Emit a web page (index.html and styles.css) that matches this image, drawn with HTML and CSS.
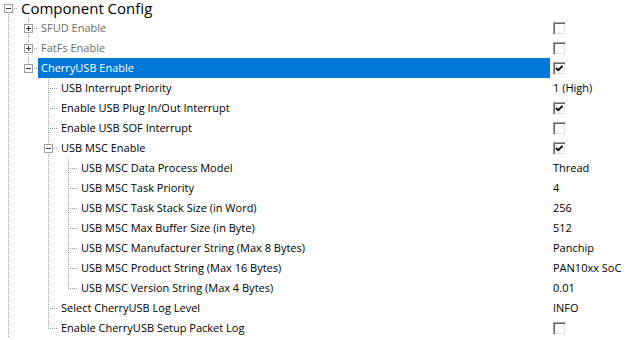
FILE: index.html
```html
<!DOCTYPE html>
<html>
<head>
    <meta charset="UTF-8">
    <title>Component Config</title>
    <link rel="stylesheet" href="styles.css">
</head>
<body>
    <div class="tree">
        <div class="row">
            <div class="node">
                <span class="slot down"><span class="exp minus"></span></span>
                <span class="label root">Component Config</span>
            </div>
            <div class="value"></div>
        </div>

        <div class="row">
            <div class="node">
                <span class="slot pipe"></span>
                <span class="slot tee"><span class="exp plus"></span></span>
                <span class="label muted">SFUD Enable</span>
            </div>
            <div class="value"><span class="check"></span></div>
        </div>

        <div class="row">
            <div class="node">
                <span class="slot pipe"></span>
                <span class="slot tee"><span class="exp plus"></span></span>
                <span class="label muted">FatFs Enable</span>
            </div>
            <div class="value"><span class="check"></span></div>
        </div>

        <div class="row">
            <div class="node">
                <span class="slot pipe"></span>
                <span class="slot ell"><span class="exp minus"></span></span>
                <span class="label selected">CherryUSB Enable</span>
            </div>
            <div class="value"><span class="check checked"><svg viewBox="0 0 13 13"><polyline points="3,6 5.2,8.2 9.6,3.8"/></svg></span></div>
        </div>

        <div class="row">
            <div class="node">
                <span class="slot pipe"></span>
                <span class="slot"></span>
                <span class="slot tee"></span>
                <span class="label">USB Interrupt Priority</span>
            </div>
            <div class="value">1 (High)</div>
        </div>

        <div class="row">
            <div class="node">
                <span class="slot pipe"></span>
                <span class="slot"></span>
                <span class="slot tee"></span>
                <span class="label">Enable USB Plug In/Out Interrupt</span>
            </div>
            <div class="value"><span class="check checked"><svg viewBox="0 0 13 13"><polyline points="3,6 5.2,8.2 9.6,3.8"/></svg></span></div>
        </div>

        <div class="row">
            <div class="node">
                <span class="slot pipe"></span>
                <span class="slot"></span>
                <span class="slot tee"></span>
                <span class="label">Enable USB SOF Interrupt</span>
            </div>
            <div class="value"><span class="check"></span></div>
        </div>

        <div class="row">
            <div class="node">
                <span class="slot pipe"></span>
                <span class="slot"></span>
                <span class="slot tee"><span class="exp minus"></span></span>
                <span class="label">USB MSC Enable</span>
            </div>
            <div class="value"><span class="check checked"><svg viewBox="0 0 13 13"><polyline points="3,6 5.2,8.2 9.6,3.8"/></svg></span></div>
        </div>

        <div class="row">
            <div class="node">
                <span class="slot pipe"></span>
                <span class="slot"></span>
                <span class="slot pipe"></span>
                <span class="slot tee"></span>
                <span class="label">USB MSC Data Process Model</span>
            </div>
            <div class="value">Thread</div>
        </div>

        <div class="row">
            <div class="node">
                <span class="slot pipe"></span>
                <span class="slot"></span>
                <span class="slot pipe"></span>
                <span class="slot tee"></span>
                <span class="label">USB MSC Task Priority</span>
            </div>
            <div class="value">4</div>
        </div>

        <div class="row">
            <div class="node">
                <span class="slot pipe"></span>
                <span class="slot"></span>
                <span class="slot pipe"></span>
                <span class="slot tee"></span>
                <span class="label">USB MSC Task Stack Size (in Word)</span>
            </div>
            <div class="value">256</div>
        </div>

        <div class="row">
            <div class="node">
                <span class="slot pipe"></span>
                <span class="slot"></span>
                <span class="slot pipe"></span>
                <span class="slot tee"></span>
                <span class="label">USB MSC Max Buffer Size (in Byte)</span>
            </div>
            <div class="value">512</div>
        </div>

        <div class="row">
            <div class="node">
                <span class="slot pipe"></span>
                <span class="slot"></span>
                <span class="slot pipe"></span>
                <span class="slot tee"></span>
                <span class="label">USB MSC Manufacturer String (Max 8 Bytes)</span>
            </div>
            <div class="value">Panchip</div>
        </div>

        <div class="row">
            <div class="node">
                <span class="slot pipe"></span>
                <span class="slot"></span>
                <span class="slot pipe"></span>
                <span class="slot tee"></span>
                <span class="label">USB MSC Product String (Max 16 Bytes)</span>
            </div>
            <div class="value">PAN10xx SoC</div>
        </div>

        <div class="row">
            <div class="node">
                <span class="slot pipe"></span>
                <span class="slot"></span>
                <span class="slot pipe"></span>
                <span class="slot ell"></span>
                <span class="label">USB MSC Version String (Max 4 Bytes)</span>
            </div>
            <div class="value">0.01</div>
        </div>

        <div class="row">
            <div class="node">
                <span class="slot pipe"></span>
                <span class="slot"></span>
                <span class="slot tee"></span>
                <span class="label">Select CherryUSB Log Level</span>
            </div>
            <div class="value">INFO</div>
        </div>

        <div class="row">
            <div class="node">
                <span class="slot pipe"></span>
                <span class="slot"></span>
                <span class="slot ell"></span>
                <span class="label">Enable CherryUSB Setup Packet Log</span>
            </div>
            <div class="value"><span class="check"></span></div>
        </div>
    </div>
</body>
</html>
```

FILE: styles.css
```css
body {
    margin: 0;
    padding: 0;
    background: #ffffff;
    font-family: 'Open Sans', 'Noto Sans', sans-serif;
    font-size: 11px;
    color: #000000;
    overflow: hidden;
}

.tree {
    margin: -2px 0 0 -2px;
}

.row {
    display: flex;
    height: 20px;
}

.node {
    display: flex;
    width: 552px;
    flex-shrink: 0;
}

.slot {
    width: 20px;
    height: 20px;
    flex-shrink: 0;
    display: flex;
    align-items: flex-start;
    padding: 6px 0 0 6px;
    box-sizing: border-box;
}

/* dotted tree connectors */
.pipe {
    background: repeating-linear-gradient(to bottom, #a0a0a0 0 1px, transparent 1px 2px) 10px 0 / 1px 100% no-repeat;
}

.tee {
    background:
        repeating-linear-gradient(to right, #a0a0a0 0 1px, transparent 1px 2px) 10px 10px / 10px 1px no-repeat,
        repeating-linear-gradient(to bottom, #a0a0a0 0 1px, transparent 1px 2px) 10px 0 / 1px 100% no-repeat;
}

.ell {
    background:
        repeating-linear-gradient(to right, #a0a0a0 0 1px, transparent 1px 2px) 10px 10px / 10px 1px no-repeat,
        repeating-linear-gradient(to bottom, #a0a0a0 0 1px, transparent 1px 2px) 10px 0 / 1px 10px no-repeat;
}

.down {
    background:
        repeating-linear-gradient(to right, #a0a0a0 0 1px, transparent 1px 2px) 10px 10px / 10px 1px no-repeat,
        repeating-linear-gradient(to bottom, #a0a0a0 0 1px, transparent 1px 2px) 10px 10px / 1px 10px no-repeat;
}

.exp {
    width: 9px;
    height: 9px;
    box-sizing: border-box;
    border: 1px solid #a0a0a0;
    background-color: #ffffff;
}

.exp.minus {
    background: linear-gradient(#3c3c3c, #3c3c3c) 1px 3px / 5px 1px no-repeat, #ffffff;
}

.exp.plus {
    background:
        linear-gradient(#3c3c3c, #3c3c3c) 1px 3px / 5px 1px no-repeat,
        linear-gradient(#3c3c3c, #3c3c3c) 3px 1px / 1px 5px no-repeat,
        #ffffff;
}

.label {
    flex: 1;
    padding-left: 3px;
    line-height: 20px;
    white-space: nowrap;
}

.label.root {
    font-size: 15px;
    line-height: 16px;
    align-self: center;
}

.label.muted {
    color: #6d6d6d;
}

.label.selected {
    background: #0078d7;
    color: #ffffff;
}

.value {
    flex: 1;
    padding-left: 3px;
    line-height: 20px;
    display: flex;
    align-items: center;
    white-space: nowrap;
}

.check {
    width: 13px;
    height: 13px;
    box-sizing: border-box;
    border: 1px solid;
    border-color: #a0a0a0 #ffffff #ffffff #a0a0a0;
    box-shadow: inset 1px 1px 0 #696969, inset -1px -1px 0 #e3e3e3;
    background: #ffffff;
    display: flex;
}

.check svg {
    width: 13px;
    height: 13px;
    margin: -1px;
}

.check polyline {
    fill: none;
    stroke: #000000;
    stroke-width: 1.9;
}
```
